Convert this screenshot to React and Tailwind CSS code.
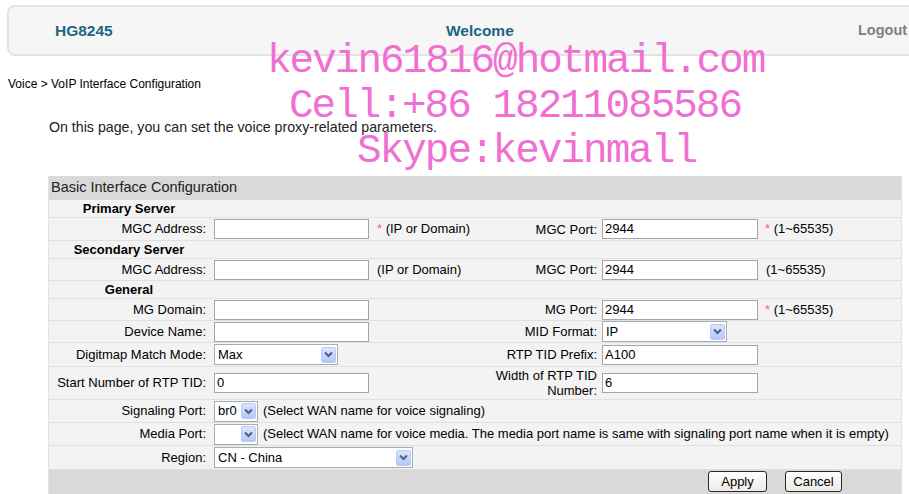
import React from "react";

const ARIAL = { fontFamily: '"Liberation Sans", Arial, sans-serif' };

function TextInput({ className = "w-[155px]", value = "" }) {
  return (
    <div className={`h-[20px] border border-[#a5a5a5] bg-white text-[13px] leading-[18px] pl-[2px] text-black ${className}`}>
      {value}
    </div>
  );
}

function Arrow() {
  return (
    <div className="h-[16px] w-[15px] rounded-[2px] border border-[#b9cbf3] bg-gradient-to-b from-[#dbe5fc] to-[#b4c8f6] flex items-center justify-center">
      <svg width="9" height="7" viewBox="0 0 9 7">
        <path d="M1 1.5 L4.5 5 L8 1.5" fill="none" stroke="#4a5f8a" strokeWidth="2" />
      </svg>
    </div>
  );
}

function Select({ className = "w-[124px]", value = "" }) {
  return (
    <div className={`h-[21px] border border-[#a5acb2] bg-white flex items-center justify-between pl-[3px] pr-[1px] text-[13px] ${className}`}>
      <span>{value}</span>
      <Arrow />
    </div>
  );
}

function Star() {
  return <span className="text-[#e36b80]">* </span>;
}

function Row({ h, children }) {
  return <div className={`flex items-center border-b border-[#e0e0e0] ${h}`}>{children}</div>;
}

function Label({ children }) {
  return <div className="w-[160px] shrink-0 text-right pr-[3px]">{children}</div>;
}

function Label2({ children }) {
  return <div className="w-[118px] shrink-0 text-right pr-[2px] leading-[15px]">{children}</div>;
}

function Section({ title, h }) {
  return (
    <Row h={h}>
      <div className="w-[160px] shrink-0 text-center font-bold">{title}</div>
    </Row>
  );
}

function Mid({ children }) {
  return <div className="w-[272px] shrink-0 pl-[5px] flex items-center">{children}</div>;
}

function Right({ children }) {
  return <div className="flex-1 pl-[3px] flex items-center">{children}</div>;
}

export default function App() {
  return (
    <div className="relative w-[909px] h-[494px] overflow-hidden bg-white text-black" style={ARIAL}>
      {/* Header */}
      <div className="ml-[7px] mt-[5px] w-[930px] h-[51px] rounded-[8px] border-2 border-[#e3e3e3] bg-[#f6f6f6] flex items-center pl-[46px]">
        <div className="w-[391px] shrink-0 font-bold text-[15.5px] text-[#1b6682]">HG8245</div>
        <div className="w-[412px] shrink-0 font-bold text-[15.5px] text-[#1b6682]">Welcome</div>
        <div className="font-bold text-[14.5px] text-[#808080]">Logout</div>
      </div>

      {/* Breadcrumb */}
      <div className="mt-[21px] pl-[8px] text-[12px] leading-[14px]">Voice &gt; VoIP Interface Configuration</div>

      {/* Description */}
      <div className="mt-[28px] pl-[49px] text-[14.2px] leading-[17px] text-[#222]">
        On this page, you can set the voice proxy-related parameters.
      </div>

      {/* Table */}
      <div className="mt-[40px] ml-[48px] w-[854px] border-r border-l border-[#e2e2e2] text-[13px] bg-[#f3f3f3]">
        <div className="h-[24px] bg-[#d9d9d9] flex items-center pl-[2px] text-[14.5px] text-[#222]">
          Basic Interface Configuration
        </div>

        <Section title="Primary Server" h="h-[18px]" />
        <Row h="h-[23px]">
          <Label>MGC Address:</Label>
          <Mid>
            <TextInput />
            <span className="ml-[8px]"><Star />(IP or Domain)</span>
          </Mid>
          <Label2>MGC Port:</Label2>
          <Right>
            <TextInput className="w-[156px]" value="2944" />
            <span className="ml-[7px]"><Star />(1~65535)</span>
          </Right>
        </Row>

        <Section title="Secondary Server" h="h-[18px]" />
        <Row h="h-[22px]">
          <Label>MGC Address:</Label>
          <Mid>
            <TextInput />
            <span className="ml-[8px]">(IP or Domain)</span>
          </Mid>
          <Label2>MGC Port:</Label2>
          <Right>
            <TextInput className="w-[156px]" value="2944" />
            <span className="ml-[8px]">(1~65535)</span>
          </Right>
        </Row>

        <Section title="General" h="h-[18px]" />
        <Row h="h-[22px]">
          <Label>MG Domain:</Label>
          <Mid>
            <TextInput />
          </Mid>
          <Label2>MG Port:</Label2>
          <Right>
            <TextInput className="w-[156px]" value="2944" />
            <span className="ml-[7px]"><Star />(1~65535)</span>
          </Right>
        </Row>
        <Row h="h-[22px]">
          <Label>Device Name:</Label>
          <Mid>
            <TextInput />
          </Mid>
          <Label2>MID Format:</Label2>
          <Right>
            <Select className="w-[125px]" value="IP" />
          </Right>
        </Row>
        <Row h="h-[24px]">
          <Label>Digitmap Match Mode:</Label>
          <Mid>
            <Select className="w-[124px]" value="Max" />
          </Mid>
          <Label2>RTP TID Prefix:</Label2>
          <Right>
            <TextInput className="w-[156px]" value="A100" />
          </Right>
        </Row>
        <Row h="h-[33px]">
          <Label>Start Number of RTP TID:</Label>
          <Mid>
            <TextInput value="0" />
          </Mid>
          <Label2>Width of RTP TID Number:</Label2>
          <Right>
            <TextInput className="w-[156px]" value="6" />
          </Right>
        </Row>
        <Row h="h-[23px]">
          <Label>Signaling Port:</Label>
          <div className="flex-1 pl-[5px] flex items-center">
            <Select className="w-[44px]" value="br0" />
            <span className="ml-[5px]">(Select WAN name for voice signaling)</span>
          </div>
        </Row>
        <Row h="h-[23px]">
          <Label>Media Port:</Label>
          <div className="flex-1 pl-[5px] flex items-center">
            <Select className="w-[44px]" value="" />
            <span className="ml-[5px] whitespace-nowrap">
              (Select WAN name for voice media. The media port name is same with signaling port name when it is empty)
            </span>
          </div>
        </Row>
        <Row h="h-[24px]">
          <Label>Region:</Label>
          <div className="flex-1 pl-[5px] flex items-center">
            <Select className="w-[199px]" value="CN - China" />
          </div>
        </Row>

        <div className="h-[40px] bg-[#d9d9d9] flex items-start justify-end pr-[59px] pt-[1px] gap-[18px]">
          <button className="w-[59px] h-[21px] rounded-[3px] border border-[#2a2a2a] bg-gradient-to-b from-[#ffffff] to-[#ecebe6] text-[13px] leading-[19px] text-black">
            Apply
          </button>
          <button className="w-[57px] h-[21px] rounded-[3px] border border-[#2a2a2a] bg-gradient-to-b from-[#ffffff] to-[#ecebe6] text-[13px] leading-[19px] text-black">
            Cancel
          </button>
        </div>
      </div>

      {/* Watermark overlay */}
      <div
        className="absolute left-0 top-[39px] pointer-events-none text-[#f070d2] text-[41px] leading-[45px] tracking-[-2px] whitespace-pre"
        style={{ fontFamily: '"Liberation Mono", "Courier New", monospace' }}
      >
        <div className="pl-[267px]">kevin61816@hotmail.com</div>
        <div className="pl-[289px]">Cell:+86 18211085586</div>
        <div className="pl-[357px]">Skype:kevinmall</div>
      </div>
    </div>
  );
}
